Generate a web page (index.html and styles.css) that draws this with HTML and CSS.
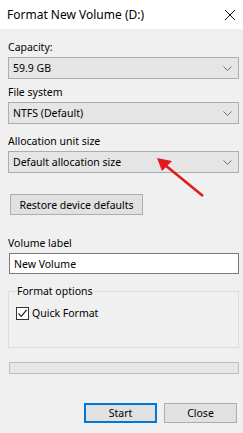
FILE: index.html
```html
<!DOCTYPE html>
<html lang="en">
<head>
  <meta charset="UTF-8" />
  <meta name="viewport" content="width=device-width, initial-scale=1.0" />
  <title>Format New Volume (D:)</title>
  <link rel="stylesheet" href="styles.css">
</head>
<body>
  <div class="window">
    <div class="titlebar">
      <span class="title">Format New Volume (D:)</span>
      <svg class="close-icon" width="12" height="12" viewBox="0 0 12 12">
        <path d="M1 1 L11 11 M11 1 L1 11" stroke="#111" stroke-width="1" fill="none"/>
      </svg>
    </div>

    <div class="content">
      <div class="field">
        <div class="label">Capacity:</div>
        <div class="select"><span>59.9 GB</span><svg class="chevron" width="9" height="5" viewBox="0 0 9 5"><path d="M0.5 0.5 L4.5 4.5 L8.5 0.5" stroke="#707070" fill="none"/></svg></div>
      </div>

      <div class="field">
        <div class="label">File system</div>
        <div class="select"><span>NTFS (Default)</span><svg class="chevron" width="9" height="5" viewBox="0 0 9 5"><path d="M0.5 0.5 L4.5 4.5 L8.5 0.5" stroke="#707070" fill="none"/></svg></div>
      </div>

      <div class="field alloc">
        <div class="label">Allocation unit size</div>
        <div class="select"><span>Default allocation size</span><svg class="chevron" width="9" height="5" viewBox="0 0 9 5"><path d="M0.5 0.5 L4.5 4.5 L8.5 0.5" stroke="#707070" fill="none"/></svg></div>
      </div>

      <button class="btn restore">Restore device defaults</button>

      <div class="field volume">
        <div class="label">Volume label</div>
        <div class="textbox">New Volume</div>
      </div>

      <fieldset class="group">
        <legend>Format options</legend>
        <div class="check">
          <span class="box">
            <svg width="11" height="11" viewBox="0 0 11 11"><path d="M1.5 5.5 L4.2 8.3 L9.6 2" stroke="#222" stroke-width="1.2" fill="none"/></svg>
          </span>
          Quick Format
        </div>
      </fieldset>

      <div class="progress"></div>

      <div class="actions">
        <button class="btn primary">Start</button>
        <button class="btn">Close</button>
      </div>
    </div>

    <svg class="arrow" width="243" height="433" viewBox="0 0 243 433">
      <line x1="203" y1="196" x2="165" y2="165" stroke="#e3191b" stroke-width="2.6"/>
      <polygon points="157,158 172,161 162,171" fill="#e3191b"/>
    </svg>
  </div>
</body>
</html>
```

FILE: styles.css
```css
body {
  margin: 0;
  font-family: 'Noto Sans', sans-serif;
  font-size: 10.5px;
  color: #000;
  background: #f0f0f0;
}
.window {
  position: relative;
  width: 243px;
  height: 433px;
  background: #f0f0f0;
  overflow: hidden;
}
.titlebar {
  height: 29px;
  background: #fff;
  display: flex;
  align-items: center;
  justify-content: space-between;
  padding: 0 6px 0 7px;
}
.title {
  font-size: 12px;
}
.close-icon {
  margin-right: 1px;
}
.content {
  padding: 0 4px 0 8px;
}
.field {
  margin-top: 5px;
}
.field:first-child {
  margin-top: 10px;
}
.field.alloc {
  margin-top: 9px;
}
.field.volume {
  margin-top: 20px;
}
.label {
  height: 16px;
  line-height: 16px;
  margin-bottom: 2px;
}
.select {
  height: 22px;
  box-sizing: border-box;
  border: 1px solid #adadad;
  background: #e5e5e5;
  display: flex;
  align-items: center;
  justify-content: space-between;
  padding: 0 6px 0 4px;
}
.textbox {
  height: 21px;
  box-sizing: border-box;
  border: 1px solid #7a7a7a;
  background: #fff;
  display: flex;
  align-items: center;
  padding: 0 4px;
  margin-left: 1px;
}
.btn {
  font-family: inherit;
  font-size: 10.5px;
  color: #000;
  background: #e1e1e1;
  border: 1px solid #adadad;
  border-radius: 0;
  height: 20px;
  padding: 0;
  margin: 0;
  box-sizing: border-box;
}
.restore {
  display: block;
  margin: 21px 0 0 2px;
  width: 133px;
  height: 21px;
}
.group {
  margin: 9px 0 0;
  padding: 7px 8px 27px 7px;
  border: 1px solid #dcdcdc;
  min-width: 0;
}
.group legend {
  padding: 0 1px;
  height: 16px;
  line-height: 16px;
}
.check {
  display: flex;
  align-items: center;
  gap: 3px;
  height: 14px;
}
.box {
  width: 13px;
  height: 13px;
  box-sizing: border-box;
  border: 1px solid #333;
  background: #fff;
  display: flex;
  align-items: center;
  justify-content: center;
}
.progress {
  margin: 14px 0 0 1px;
  height: 12px;
  box-sizing: border-box;
  border: 1px solid #bcbcbc;
  background: #e6e6e6;
}
.actions {
  margin-top: 29px;
  display: flex;
  justify-content: flex-end;
  gap: 7px;
  padding-right: 2px;
}
.actions .btn {
  width: 73px;
}
.btn.primary {
  border: 2px solid #0078d7;
}
.arrow {
  position: absolute;
  left: 0;
  top: 0;
  pointer-events: none;
}
```
